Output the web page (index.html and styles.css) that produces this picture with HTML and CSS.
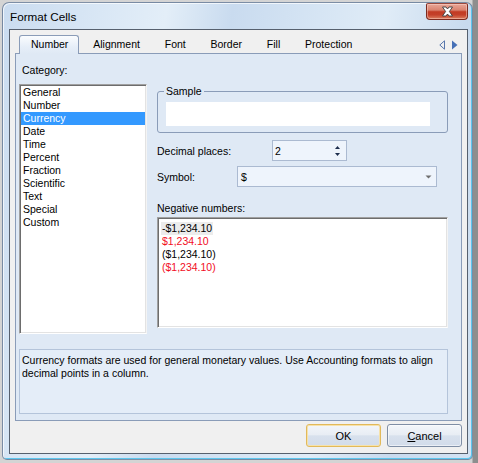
FILE: index.html
```html
<!DOCTYPE html>
<html>
<head>
<meta charset="utf-8">
<title>Format Cells</title>
<link rel="stylesheet" href="styles.css">
</head>
<body>
<div class="window">
  <div class="titlebar">
    <span class="title">Format Cells</span>
    <div class="close">
      <svg width="13" height="11" viewBox="0 0 13 11"><path d="M1.5 1 H5 L6.5 3 L8 1 H11.5 L8.4 5.5 L11.5 10 H8 L6.5 8 L5 10 H1.5 L4.6 5.5 Z" fill="#fff" stroke="#3c3c3c" stroke-width="0.9" stroke-linejoin="round"/></svg>
    </div>
  </div>
  <div class="client">
    <div class="tabs">
      <div class="tab active">Number</div>
      <div class="tab first">Alignment</div>
      <div class="tab">Font</div>
      <div class="tab">Border</div>
      <div class="tab">Fill</div>
      <div class="tab">Protection</div>
      <div class="tab-arrows">
        <svg width="19" height="10" viewBox="0 0 19 10"><path d="M5.5 0.8 L0.8 5 L5.5 9.2 Z" fill="none" stroke="#5877ad" stroke-width="1"/><path d="M13 0.5 L18.5 5 L13 9.5 Z" fill="#4670b6"/></svg>
      </div>
    </div>
    <div class="panel">
      <div class="columns">
        <div class="col-left">
          <div class="label cat-label">Category:</div>
          <ul class="listbox cat-list">
            <li>General</li>
            <li>Number</li>
            <li class="sel">Currency</li>
            <li>Date</li>
            <li>Time</li>
            <li>Percent</li>
            <li>Fraction</li>
            <li>Scientific</li>
            <li>Text</li>
            <li>Special</li>
            <li>Custom</li>
          </ul>
        </div>
        <div class="col-right">
          <fieldset class="group">
            <legend>Sample</legend>
            <div class="sample-box"></div>
          </fieldset>
          <div class="row decimal">
            <span class="row-label dec-label">Decimal places:</span>
            <div class="spin">
              <span>2</span>
              <svg width="7" height="12" viewBox="0 0 7 12"><path d="M1 4 L3.5 1 L6 4 Z" fill="#1d2d4d"/><path d="M1 8 L3.5 11 L6 8 Z" fill="#1d2d4d"/></svg>
            </div>
          </div>
          <div class="row symbol">
            <span class="row-label sym-label">Symbol:</span>
            <div class="combo">
              <span>$</span>
              <svg width="7" height="4" viewBox="0 0 7 4"><path d="M0.5 0.5 L6.5 0.5 L3.5 3.5 Z" fill="#6f6f6f"/></svg>
            </div>
          </div>
          <div class="label neg-label">Negative numbers:</div>
          <ul class="listbox neg-list">
            <li><span class="hl">-$1,234.10</span></li>
            <li class="red">$1,234.10</li>
            <li>($1,234.10)</li>
            <li class="red">($1,234.10)</li>
          </ul>
        </div>
      </div>
      <div class="desc">Currency formats are used for general monetary values. Use Accounting formats to align decimal points in a column.</div>
    </div>
    <div class="buttons">
      <button class="btn ok">OK</button>
      <button class="btn"><u>C</u>ancel</button>
    </div>
  </div>
</div>
</body>
</html>
```

FILE: styles.css
```css
* { box-sizing: border-box; }
html, body { margin: 0; padding: 0; }
body {
  width: 478px;
  height: 463px;
  overflow: hidden;
  background: linear-gradient(to right, #d4d4d4 0, #d4d4d4 472px, #8e8e8e 473px);
  font-family: "Liberation Sans", Arial, sans-serif;
  font-size: 10.5px;
  color: #000;
}
.window {
  margin: 2px 0 0 2px;
  width: 471px;
  height: 458px;
  border: 1px solid rgba(50, 70, 100, 0.55);
  border-radius: 7px 7px 5px 5px;
  background:
    linear-gradient(100deg, #cadcf0 0%, #d9e7f5 18%, #e3eef8 30%, #c9dbef 42%, #d6e5f4 58%, #e0ecf7 70%, #c8daee 85%, #d3e3f3 100%);
  box-shadow: inset 1px 1px 0 rgba(255,255,255,0.7), inset -1px -1px 0 #5cc6ee;
  padding: 0 4px 5px 6px;
  display: flex;
  flex-direction: column;
}
.titlebar {
  height: 26px;
  display: flex;
  align-items: flex-start;
  padding-left: 1px;
}
.title {
  font-size: 11.7px;
  line-height: 14px;
  margin-top: 7px;
  color: #000;
}
.close {
  margin-left: auto;
  margin-right: 0;
  width: 42px;
  height: 17px;
  border: 1px solid #7c2b20;
  border-top-color: #9b4a3e;
  border-radius: 2px 2px 4px 4px;
  background: linear-gradient(#e9a798 0%, #da8471 40%, #c23b24 52%, #c4402a 72%, #dc7f60 100%);
  box-shadow: inset 0 0 0 1px rgba(255, 220, 210, 0.45);
  display: flex;
  align-items: center;
  justify-content: center;
}
.client {
  height: 425px;
  border: 1px solid #56606e;
  background: #f0f0f0;
  display: flex;
  flex-direction: column;
}
.tabs {
  margin-top: 5px;
  height: 18px;
  display: flex;
  align-items: stretch;
  padding-left: 9px;
}
.tab {
  padding: 0 12.4px;
  line-height: 18px;
  white-space: nowrap;
}
.tab.first { margin-left: 1.5px; }
.tab.active {
  position: relative;
  z-index: 1;
  height: 19px;
  padding: 0 10px 0 11px;
  border: 1px solid #8a9cb8;
  border-bottom: none;
  border-radius: 3px 3px 0 0;
  background: linear-gradient(#fafcfe, #e6eef8 60%, #dfe9f5);
  line-height: 17px;
}
.tab-arrows {
  margin-left: auto;
  margin-right: 9px;
  display: flex;
  align-items: center;
  padding-top: 1px;
}
.panel {
  margin: 0 5px;
  height: 368px;
  border: 1px solid #8a9cb8;
  background: #dfe9f5;
  padding: 10px 0 0 3px;
}
.columns {
  display: flex;
  gap: 10px;
}
.col-left { width: 128px; }
.col-right { width: 291px; }
.label { line-height: 13px; }
.cat-label { padding-left: 3px; height: 13px; }
ul, li { margin: 0; padding: 0; list-style: none; }
.listbox {
  background: #fff;
  border: 1px solid;
  border-color: #a0a0a0 #f4f4f4 #fff #a0a0a0;
  box-shadow: inset 1px 1px 0 #6d6d6d, inset -1px -1px 0 #e3e3e3;
  padding: 1px;
}
.listbox li { line-height: 13px; white-space: nowrap; }
.cat-list {
  margin-top: 7px;
  height: 250px;
}
.cat-list li { padding-left: 2px; }
.cat-list li.sel { background: #3399ff; color: #fff; }
.group {
  margin: 21px 0 0 0;
  border: 1px solid #8a9cb8;
  border-radius: 3px;
  padding: 0 0 5px 8px;
  min-width: 0;
  height: 48px;
}
.group legend {
  padding: 0 2px;
  margin-left: -2px;
  line-height: 13px;
}
.sample-box {
  margin-top: 4px;
  width: 264px;
  height: 24px;
  background: #fff;
}
.row {
  display: flex;
  align-items: center;
  height: 21px;
}
.decimal { margin-top: 7px; }
.symbol { margin-top: 5px; }
.dec-label { width: 115px; }
.sym-label { width: 80px; }
.spin, .combo {
  height: 21px;
  border: 1px solid #abbad1;
  background: #eef4fc;
  display: flex;
  align-items: center;
  justify-content: space-between;
}
.spin { width: 75px; padding: 0 5px 0 2px; }
.combo { width: 200px; padding: 0 4px 0 3px; }
.neg-label { margin-top: 15px; }
.neg-list {
  margin-top: 2px;
  height: 111px;
  padding: 4px 1px 1px 3px;
}
.neg-list li { padding-left: 0; }
.neg-list .hl { background: #ececec; padding: 0 1px; display: inline-block; }
.neg-list li:not(:first-child) { padding-left: 1px; }
.neg-list .red { color: #f20d1e; }
.desc {
  margin-top: 15px;
  width: 429px;
  height: 65px;
  border: 1px solid #b4c4da;
  background: #e4edf8;
  padding: 4px 4px 0 2px;
  line-height: 13px;
}
.buttons {
  margin-top: 3px;
  height: 23px;
  display: flex;
  justify-content: flex-end;
  gap: 6px;
  padding-right: 5px;
}
.btn {
  width: 75px;
  height: 23px;
  margin: 0;
  padding: 0;
  border: 1px solid #7f8ea5;
  border-radius: 3px;
  background: linear-gradient(#f3f6fa 0%, #e8edf4 46%, #d8e1ed 52%, #d2dcea 100%);
  box-shadow: inset 0 0 0 1px rgba(255, 255, 255, 0.55);
  font-family: "Liberation Sans", Arial, sans-serif;
  font-size: 11px;
  color: #000;
}
.btn u { text-decoration: underline; }
.btn.ok {
  border-color: #e2b95a;
  box-shadow: inset 0 0 0 1px #f6e2ab;
}
```
